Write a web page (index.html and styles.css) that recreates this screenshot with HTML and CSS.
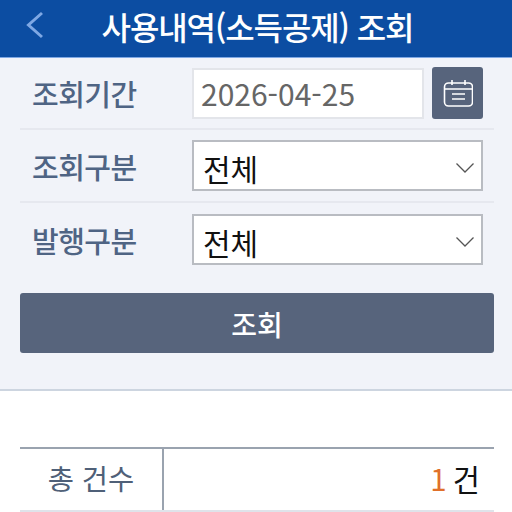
FILE: index.html
```html
<!DOCTYPE html>
<html lang="ko">

<head>
    <title>사용내역(소득공제) 조회</title>
    <meta name="viewport" content="width=device-width, user-scalable=no, minimum-scale=1.0, maximum-scale=1.0">
    <link rel="stylesheet" href="styles.css">
</head>

<body>
    <div class="app-header">
        <svg class="back-icon" width="18" height="28" viewBox="0 0 18 28">
            <path d="M16 2 L2.5 14 L16 26" fill="none" stroke="#7fa8e4" stroke-width="3"/>
        </svg>
        <h1 class="app-title">사용내역(소득공제) 조회</h1>
    </div>

    <div class="search-panel">
        <div class="search-row">
            <div class="search-label">조회기간</div>
            <div class="date-input">2026-04-25</div>
            <div class="cal-button">
                <svg width="30" height="30" viewBox="0 0 30 30">
                    <rect x="1.5" y="5" width="28" height="23" rx="4" fill="none" stroke="#fff" stroke-width="1.6"/>
                    <path d="M1.5 11 H29.5 M9 2 V7 M22 2 V7 M9 16 H22 M9 21 H22" fill="none" stroke="#fff" stroke-width="1.6"/>
                </svg>
            </div>
        </div>
        <div class="search-row">
            <div class="search-label">조회구분</div>
            <div class="select-box">
                <span>전체</span>
                <svg width="18" height="12" viewBox="0 0 18 12">
                    <path d="M0.5 1.5 L9 10 L17.5 1.5" fill="none" stroke="#555" stroke-width="1.3"/>
                </svg>
            </div>
        </div>
        <div class="search-row last">
            <div class="search-label">발행구분</div>
            <div class="select-box">
                <span>전체</span>
                <svg width="18" height="12" viewBox="0 0 18 12">
                    <path d="M0.5 1.5 L9 10 L17.5 1.5" fill="none" stroke="#555" stroke-width="1.3"/>
                </svg>
            </div>
        </div>
        <button class="search-button">조회</button>
    </div>

    <div class="total-table">
        <div class="total-label">총 건수</div>
        <div class="total-value"><span class="count">1</span> 건</div>
    </div>
</body>

</html>
```

FILE: styles.css
```css
html,
body {
    margin: 0;
    height: 100%;
    overflow: hidden;
    background: #fff;
    font-family: "Noto Sans CJK KR", "Noto Sans", sans-serif;
}

.app-header {
    height: 57px;
    background: #0c4da2;
    border-bottom: 1px solid #7fa8e4;
    display: flex;
    align-items: center;
    justify-content: center;
    position: relative;
}

.back-icon {
    position: absolute;
    left: 26px;
    top: 11px;
}

.app-title {
    margin: 0 0 6px 3px;
    color: #fff;
    font-size: 32px;
    font-weight: 500;
    letter-spacing: -1.1px;
}

.search-panel {
    height: 333px;
    box-sizing: border-box;
    background: #f1f3f9;
    border-bottom: 2px solid #cdd5e0;
    padding: 0 18px 0 20px;
}

.search-row {
    height: 73px;
    box-sizing: border-box;
    border-bottom: 2px solid #e6e8ef;
    display: flex;
    align-items: center;
    padding: 0 11px 0 12px;
}

.search-row:first-child {
    height: 72px;
}

.search-row.last {
    border-bottom: none;
}

.search-label {
    width: 160px;
    color: #4f6484;
    font-size: 29px;
    font-weight: 500;
    letter-spacing: -0.5px;
}

.date-input {
    width: 232px;
    height: 51px;
    box-sizing: border-box;
    background: #fff;
    border: 2px solid #e3e5ea;
    color: #666;
    font-size: 30px;
    line-height: 47px;
    padding-left: 7px;
}

.cal-button {
    width: 51px;
    height: 52px;
    margin-left: 8px;
    background: #57647c;
    border-radius: 3px;
    display: flex;
    align-items: center;
    justify-content: center;
}

.select-box {
    flex: 1;
    height: 51px;
    box-sizing: border-box;
    background: #fff;
    border: 2px solid #b9bcc2;
    color: #111;
    font-size: 30px;
    display: flex;
    align-items: center;
    justify-content: space-between;
    padding: 4px 7px 0 9px;
}

.search-button {
    display: block;
    width: 100%;
    height: 60px;
    margin-top: 17px;
    padding: 0 0 1px;
    border: none;
    border-radius: 3px;
    background: #57647c;
    color: #fff;
    font-family: inherit;
    font-size: 28px;
    font-weight: 500;
    line-height: 63px;
}

.total-table {
    margin: 56px 18px 0 20px;
    height: 65px;
    box-sizing: border-box;
    border-top: 2px solid #9aa3af;
    border-bottom: 2px solid #dfe3ea;
    display: flex;
}

.total-label {
    width: 142px;
    border-right: 2px solid #9aa3af;
    color: #4f6078;
    font-size: 28.5px;
    text-align: center;
    line-height: 58px;
}

.total-value {
    flex: 1;
    text-align: right;
    padding-right: 14px;
    color: #111;
    font-size: 29.5px;
    line-height: 58px;
    word-spacing: -2px;
}

.count {
    color: #e0702a;
}
```
